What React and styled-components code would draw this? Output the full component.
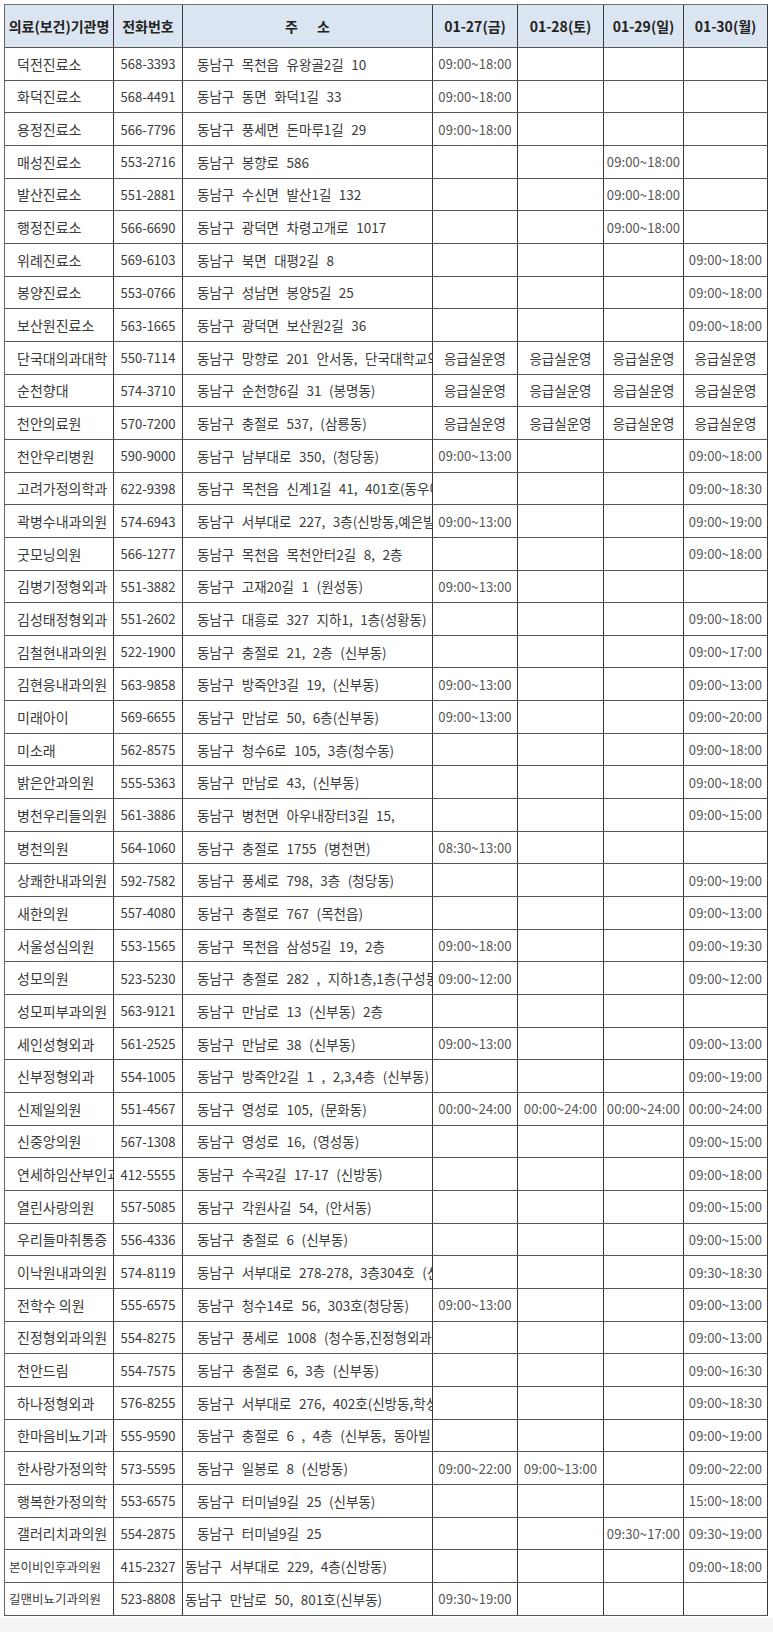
import React from 'react'
import styled, { createGlobalStyle } from 'styled-components'

const GlobalStyle = createGlobalStyle`
  html, body {
    margin: 0;
    padding: 0;
    background: #f5f5f5;
  }
  body {
    font-family: "Noto Sans CJK KR", "Noto Sans", sans-serif;
  }
`

const COLS = '109px 69px 250px 85px 86px 80px 84px'

const Page = styled.div`
  background: #fff;
  width: 773px;
  height: 1618px;
  box-sizing: border-box;
  padding: 4px 0 0 4px;
`

const Sheet = styled.div`
  width: 764px;
  border-left: 1px solid #666;
  border-top: 1px solid #777;
  box-sizing: border-box;
`

const Row = styled.div`
  display: grid;
  grid-template-columns: ${COLS};
  height: ${(p) => (p.head ? '43px' : '32.67px')};
  box-sizing: border-box;
  border-bottom: 1px solid #555;
  background: ${(p) => (p.head ? '#dbe5f1' : '#fff')};
`

const Cell = styled.div`
  display: flex;
  align-items: center;
  justify-content: ${(p) => p.align || 'center'};
  padding-left: ${(p) => (p.pad != null ? p.pad : 0)}px;
  border-right: 1px solid #3a3a3a;
  overflow: hidden;
  white-space: nowrap;
  box-sizing: border-box;
  font-size: ${(p) => p.size || 13}px;
  color: ${(p) => p.color || '#3b3b3b'};
  word-spacing: ${(p) => p.words || 0}px;
`

const HeadCell = styled(Cell)`
  font-weight: 700;
  color: #222;
  font-size: 14px;
  white-space: pre;
`

const Time = styled(Cell)`
  font-size: 13px;
  color: #555;
  letter-spacing: 0.1px;
`

const HEAD = ['의료(보건)기관명', '전화번호', '주      소', '01-27(금)', '01-28(토)', '01-29(일)', '01-30(월)']

const ER = '응급실운영'
const ALL = '00:00~24:00'

const ROWS = [
  ['덕전진료소', '568-3393', '동남구 목천읍 유왕골2길 10', '09:00~18:00', '', '', ''],
  ['화덕진료소', '568-4491', '동남구 동면 화덕1길 33', '09:00~18:00', '', '', ''],
  ['용정진료소', '566-7796', '동남구 풍세면 돈마루1길 29', '09:00~18:00', '', '', ''],
  ['매성진료소', '553-2716', '동남구 봉향로 586', '', '', '09:00~18:00', ''],
  ['발산진료소', '551-2881', '동남구 수신면 발산1길 132', '', '', '09:00~18:00', ''],
  ['행정진료소', '566-6690', '동남구 광덕면 차령고개로 1017', '', '', '09:00~18:00', ''],
  ['위례진료소', '569-6103', '동남구 북면 대평2길 8', '', '', '', '09:00~18:00'],
  ['봉양진료소', '553-0766', '동남구 성남면 봉양5길 25', '', '', '', '09:00~18:00'],
  ['보산원진료소', '563-1665', '동남구 광덕면 보산원2길 36', '', '', '', '09:00~18:00'],
  ['단국대의과대학', '550-7114', '동남구 망향로 201 안서동, 단국대학교의과대학', ER, ER, ER, ER],
  ['순천향대', '574-3710', '동남구 순천향6길 31 (봉명동)', ER, ER, ER, ER],
  ['천안의료원', '570-7200', '동남구 충절로 537, (삼룡동)', ER, ER, ER, ER],
  ['천안우리병원', '590-9000', '동남구 남부대로 350, (청당동)', '09:00~13:00', '', '', '09:00~18:00'],
  ['고려가정의학과', '622-9398', '동남구 목천읍 신계1길 41, 401호(동우아파트)', '', '', '', '09:00~18:30'],
  ['곽병수내과의원', '574-6943', '동남구 서부대로 227, 3층(신방동,예은빌딩)', '09:00~13:00', '', '', '09:00~19:00'],
  ['굿모닝의원', '566-1277', '동남구 목천읍 목천안터2길 8, 2층', '', '', '', '09:00~18:00'],
  ['김병기정형외과', '551-3882', '동남구 고재20길 1 (원성동)', '09:00~13:00', '', '', ''],
  ['김성태정형외과', '551-2602', '동남구 대흥로 327 지하1, 1층(성황동)', '', '', '', '09:00~18:00'],
  ['김철현내과의원', '522-1900', '동남구 충절로 21, 2층 (신부동)', '', '', '', '09:00~17:00'],
  ['김현응내과의원', '563-9858', '동남구 방죽안3길 19, (신부동)', '09:00~13:00', '', '', '09:00~13:00'],
  ['미래아이', '569-6655', '동남구 만남로 50, 6층(신부동)', '09:00~13:00', '', '', '09:00~20:00'],
  ['미소래', '562-8575', '동남구 청수6로 105, 3층(청수동)', '', '', '', '09:00~18:00'],
  ['밝은안과의원', '555-5363', '동남구 만남로 43, (신부동)', '', '', '', '09:00~18:00'],
  ['병천우리들의원', '561-3886', '동남구 병천면 아우내장터3길 15,', '', '', '', '09:00~15:00'],
  ['병천의원', '564-1060', '동남구 충절로 1755 (병천면)', '08:30~13:00', '', '', ''],
  ['상쾌한내과의원', '592-7582', '동남구 풍세로 798, 3층 (청당동)', '', '', '', '09:00~19:00'],
  ['새한의원', '557-4080', '동남구 충절로 767 (목천읍)', '', '', '', '09:00~13:00'],
  ['서울성심의원', '553-1565', '동남구 목천읍 삼성5길 19, 2층', '09:00~18:00', '', '', '09:00~19:30'],
  ['성모의원', '523-5230', '동남구 충절로 282 , 지하1층,1층(구성동)', '09:00~12:00', '', '', '09:00~12:00'],
  ['성모피부과의원', '563-9121', '동남구 만남로 13 (신부동) 2층', '', '', '', ''],
  ['세인성형외과', '561-2525', '동남구 만남로 38 (신부동)', '09:00~13:00', '', '', '09:00~13:00'],
  ['신부정형외과', '554-1005', '동남구 방죽안2길 1 , 2,3,4층 (신부동)', '', '', '', '09:00~19:00'],
  ['신제일의원', '551-4567', '동남구 영성로 105, (문화동)', ALL, ALL, ALL, ALL],
  ['신중앙의원', '567-1308', '동남구 영성로 16, (영성동)', '', '', '', '09:00~15:00'],
  ['연세하임산부인과', '412-5555', '동남구 수곡2길 17-17 (신방동)', '', '', '', '09:00~18:00'],
  ['열린사랑의원', '557-5085', '동남구 각원사길 54, (안서동)', '', '', '', '09:00~15:00'],
  ['우리들마취통증', '556-4336', '동남구 충절로 6 (신부동)', '', '', '', '09:00~15:00'],
  ['이낙원내과의원', '574-8119', '동남구 서부대로 278-278, 3층304호 (신방동)', '', '', '', '09:30~18:30'],
  ['전학수 의원', '555-6575', '동남구 청수14로 56, 303호(청당동)', '09:00~13:00', '', '', '09:00~13:00'],
  ['진정형외과의원', '554-8275', '동남구 풍세로 1008 (청수동,진정형외과)', '', '', '', '09:00~13:00'],
  ['천안드림', '554-7575', '동남구 충절로 6, 3층 (신부동)', '', '', '', '09:00~16:30'],
  ['하나정형외과', '576-8255', '동남구 서부대로 276, 402호(신방동,학성빌딩)', '', '', '', '09:00~18:30'],
  ['한마음비뇨기과', '555-9590', '동남구 충절로 6 , 4층 (신부동, 동아빌딩)', '', '', '', '09:00~19:00'],
  ['한사랑가정의학', '573-5595', '동남구 일봉로 8 (신방동)', '09:00~22:00', '09:00~13:00', '', '09:00~22:00'],
  ['행복한가정의학', '553-6575', '동남구 터미널9길 25 (신부동)', '', '', '', '15:00~18:00'],
  ['갤러리치과의원', '554-2875', '동남구 터미널9길 25', '', '', '09:30~17:00', '09:30~19:00'],
  ['본이비인후과의원', '415-2327', '동남구 서부대로 229, 4층(신방동)', '', '', '', '09:00~18:00', 'small'],
  ['길맨비뇨기과의원', '523-8808', '동남구 만남로 50, 801호(신부동)', '09:30~19:00', '', '', '', 'small'],
]

const DataRow = ({ item }) => {
  const [name, phone, addr, d1, d2, d3, d4, kind] = item
  const small = kind === 'small'
  return (
    <Row>
      <Cell align="flex-start" pad={small ? 4 : 12} size={small ? 12.5 : 14}>
        {name}
      </Cell>
      <Cell size={13}>{phone}</Cell>
      <Cell align="flex-start" pad={small ? 2 : 14} size={13.5} words={4.5}>
        {addr}
      </Cell>
      {[d1, d2, d3, d4].map((d, i) =>
        d === ER ? (
          <Cell key={i} size={13.5}>{d}</Cell>
        ) : (
          <Time key={i}>{d}</Time>
        )
      )}
    </Row>
  )
}

export default function App() {
  return (
    <>
      <GlobalStyle />
      <Page>
        <Sheet>
          <Row head>
            {HEAD.map((h) => (
              <HeadCell key={h}>{h}</HeadCell>
            ))}
          </Row>
          {ROWS.map((r) => (
            <DataRow key={r[0]} item={r} />
          ))}
        </Sheet>
      </Page>
    </>
  )
}
